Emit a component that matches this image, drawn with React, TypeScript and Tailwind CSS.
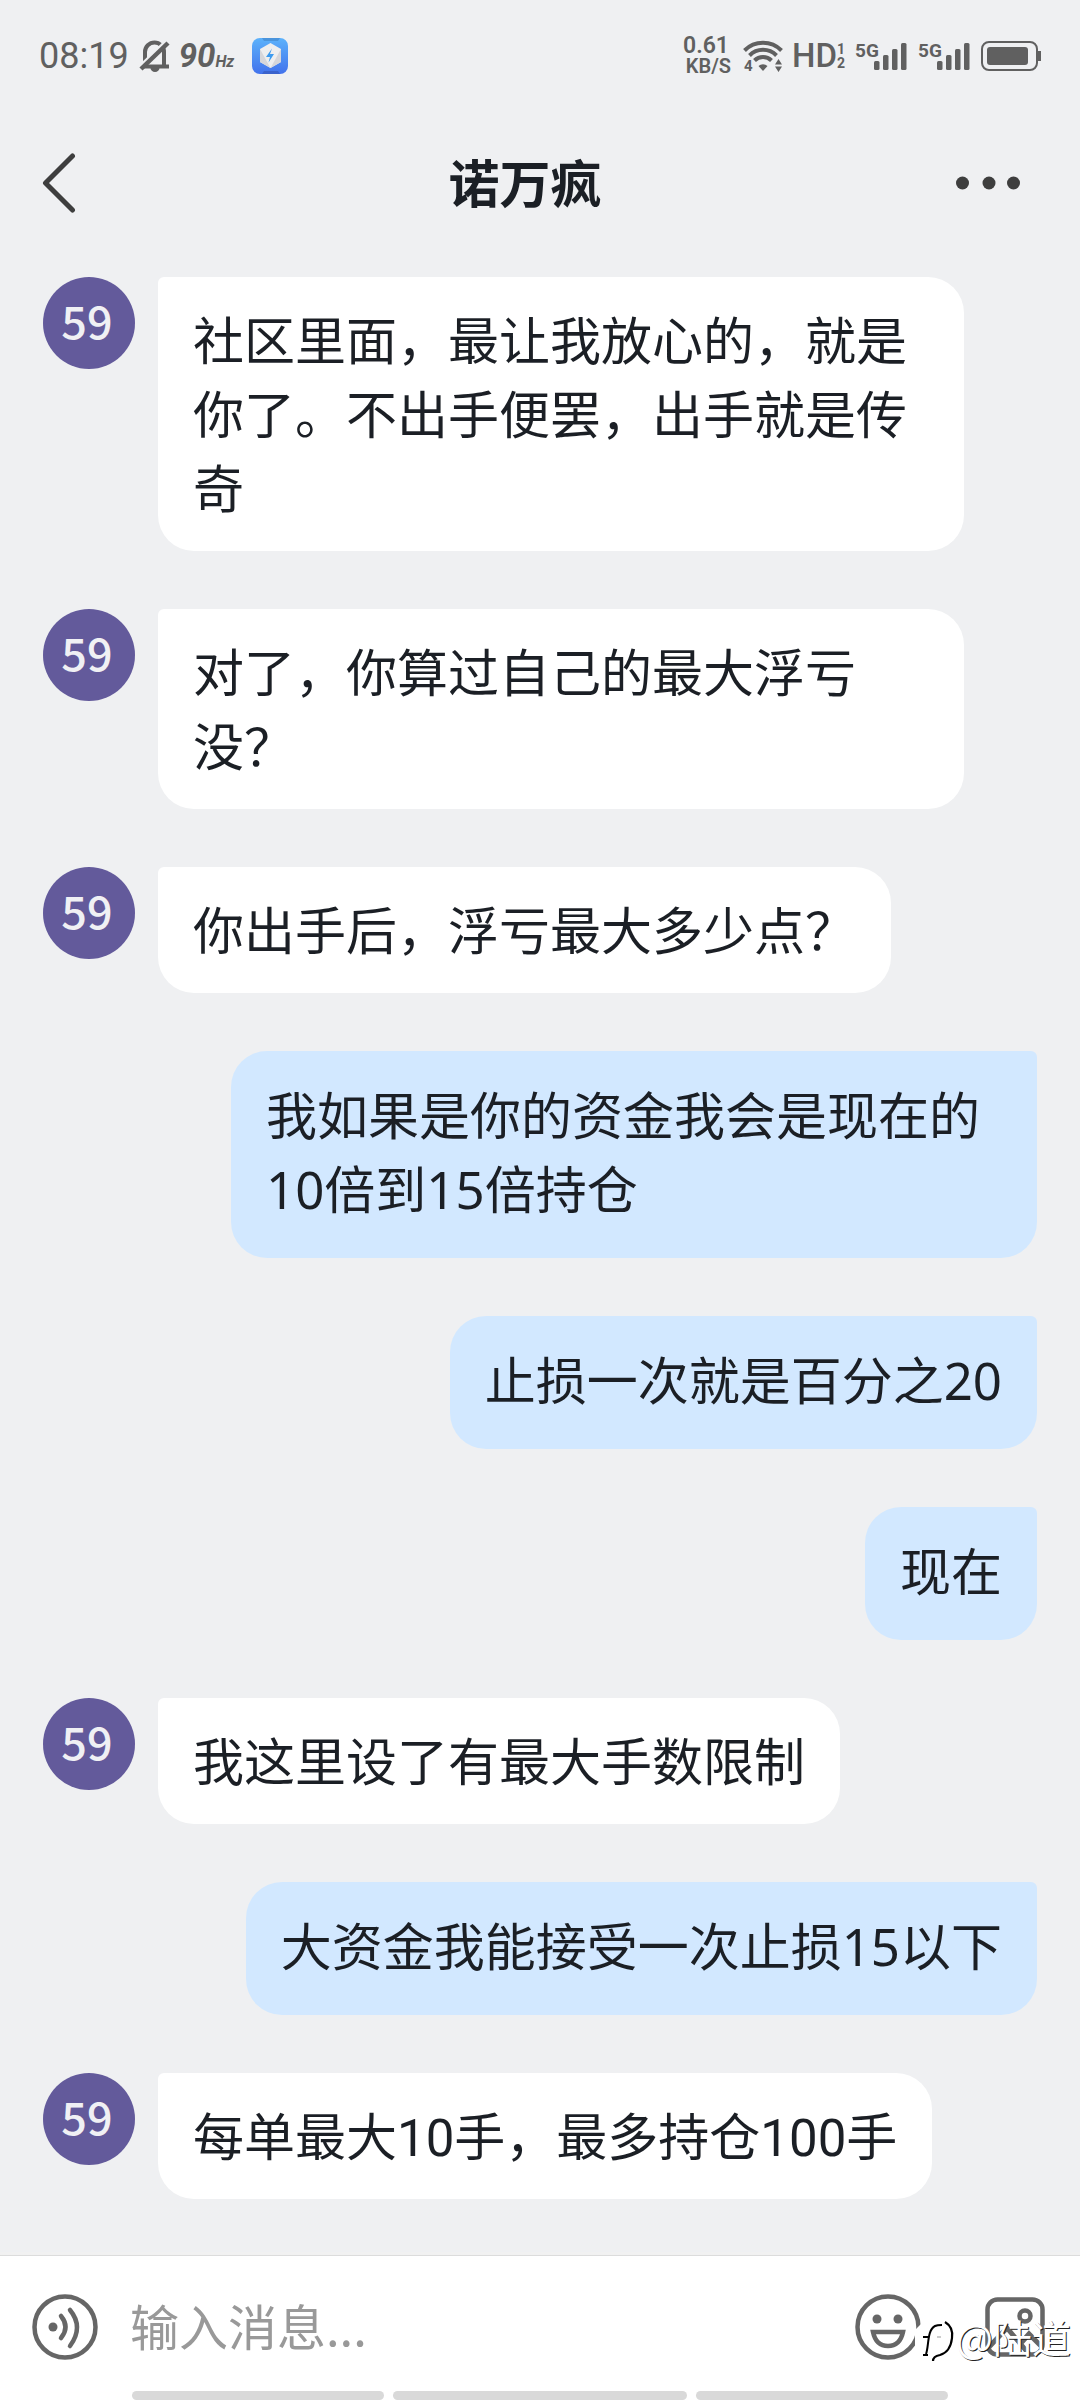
import React from "react";

type Message = { text: string; mine?: boolean };

const messages: Message[] = [
  { text: "社区里面，最让我放心的，就是你了。不出手便罢，出手就是传奇" },
  { text: "对了，你算过自己的最大浮亏没？" },
  { text: "你出手后，浮亏最大多少点？" },
  { text: "我如果是你的资金我会是现在的10倍到15倍持仓", mine: true },
  { text: "止损一次就是百分之20", mine: true },
  { text: "现在", mine: true },
  { text: "我这里设了有最大手数限制" },
  { text: "大资金我能接受一次止损15以下", mine: true },
  { text: "每单最大10手，最多持仓100手" },
];

function Signal() {
  return (
    <svg width="52" height="40" viewBox="0 -7 52 40" fill="#606060" aria-hidden="true">
      <text x="0" y="14" fontSize="19" fontWeight="700" fontFamily="Roboto, sans-serif">5G</text>
      <rect x="19" y="18" width="5.500" height="9" rx="1.5" />
      <rect x="28" y="12" width="5.500" height="15" rx="1.5" />
      <rect x="37" y="6" width="5.500" height="21" rx="1.5" />
      <rect x="46" y="0" width="5.500" height="27" rx="1.5" />
    </svg>
  );
}

function StatusBar() {
  return (
    <div className="flex h-[110px] items-center px-[39px] pt-[2px] font-['Roboto',sans-serif] text-[#606060]">
      <span className="text-[36px] leading-[36px]">08:19</span>
      <svg className="ml-[10px]" width="32" height="34" viewBox="0 0 32 34" fill="none" stroke="#606060" aria-hidden="true">
        <path d="M6 27V13a9.500 9.500 0 0 1 19 0V27" strokeWidth="4" />
        <path d="M2 27.500h28" strokeWidth="4" />
        <path d="M0 28 27 2" stroke="#eff0f2" strokeWidth="3" />
        <path d="M2 30 29 4" strokeWidth="4.500" />
        <path d="M11.500 29h9a4.500 4 0 0 1-9 0z" fill="#606060" stroke="none" />
      </svg>
      <span className="ml-2 flex items-baseline font-bold italic">
        <span className="text-[33px] leading-[36px]">90</span>
        <span className="text-[16px] leading-[20px]">Hz</span>
      </span>
      <svg className="ml-[18px]" width="36" height="36" viewBox="0 0 36 36" aria-hidden="true">
        <defs>
          <linearGradient id="app" x1="0" y1="0" x2="0" y2="1">
            <stop offset="0" stopColor="#5cb2fb" />
            <stop offset="1" stopColor="#4272ec" />
          </linearGradient>
        </defs>
        <rect width="36" height="36" rx="8" fill="url(#app)" />
        <path d="M10 0h18l-2 3H12z" fill="#4a94dc" />
        <path d="M10 36h18l-2-3H12z" fill="#3a62cc" />
        <path d="M18.500 5 29 11v13l-10.500 6L8 24V11z" fill="#eeeeef" />
        <path d="M8 11 18.500 30 8 24zM29 11 18.500 30 29 24z" fill="#d6d6da" />
        <path d="M20 10.500 14 19h4l-1.500 5.500L22 16h-4z" fill="#3d9bf0" />
      </svg>
      <div className="ml-auto flex items-center">
        <div className="flex flex-col items-end font-semibold">
          <span className="pr-[2px] text-[23px] leading-[20px]">0.61</span>
          <span className="text-[20px] leading-[20px]">KB/S</span>
        </div>
        <svg className="ml-3" width="40" height="40" viewBox="0 -4 40 40" fill="none" stroke="#606060" strokeWidth="4" aria-hidden="true">
          <path d="M1.500 10.500a26 26 0 0 1 37 0" />
          <path d="M6.500 15.500a19 19 0 0 1 27 0" />
          <path d="M11.500 20.500a12 12 0 0 1 17 0" />
          <path d="M15.500 26a6.500 6.500 0 0 1 9 0L20 31z" fill="#606060" stroke="none" />
          <text x="1" y="31" fontSize="15" fontWeight="700" fontFamily="Roboto, sans-serif" fill="#606060" stroke="none">4</text>
          <path d="M32 24.500 35.500 19l3.500 5.500zM32 26.500 35.500 32l3.500-5.500z" fill="#606060" stroke="none" />
        </svg>
        <span className="ml-[9px] text-[33px] font-medium leading-[36px]">HD</span>
        <span className="flex flex-col text-[14px] font-bold leading-[14px]">
          <span>1</span>
          <span>2</span>
        </span>
        <div className="ml-[10px] flex gap-[11px]">
          <Signal />
          <Signal />
        </div>
        <svg className="ml-[11px]" width="60" height="30" viewBox="0 0 60 30" fill="#606060" aria-hidden="true">
          <rect x="1" y="1" width="55" height="28" rx="7" fill="none" stroke="#606060" strokeWidth="2" />
          <rect x="6" y="6" width="41" height="18" rx="3" />
          <rect x="57" y="10" width="3" height="10" />
        </svg>
      </div>
    </div>
  );
}

function Header() {
  return (
    <header className="flex h-[146px] items-center justify-between pl-[40px] pr-[60px]">
      <button type="button" aria-label="返回" className="flex w-[54px]">
        <svg width="36" height="60" viewBox="0 0 36 60" fill="none" stroke="#3e3e3e" strokeWidth="5" strokeLinecap="round" strokeLinejoin="round" aria-hidden="true">
          <path d="M32.500 3 5.500 30l27 27" />
        </svg>
      </button>
      <h1 className="font-['Noto_Sans','Noto_Sans_CJK_SC',sans-serif] text-[51px] font-bold leading-[74px] text-[#1b1f25]">诺万疯</h1>
      <button type="button" aria-label="更多" className="flex">
        <svg width="64" height="14" viewBox="0 0 64 14" fill="#3e3e3e" aria-hidden="true">
          <circle cx="6.500" cy="7" r="6.500" />
          <circle cx="33" cy="7" r="6.500" />
          <circle cx="57.500" cy="7" r="6.500" />
        </svg>
      </button>
    </header>
  );
}

function Bubble({ text, mine }: Message) {
  if (mine) {
    return (
      <li className="flex justify-end">
        <p className="max-w-[806px] rounded-[36px] rounded-tr-md bg-[#d2e8ff] px-[35px] pt-[27px] pb-8 font-['Noto_Sans','Noto_Sans_CJK_SC',sans-serif]">{text}</p>
      </li>
    );
  }
  return (
    <li className="flex items-start gap-[23px]">
      <span className="flex size-[92px] shrink-0 items-center justify-center rounded-full bg-[#635a9b] pr-1 pb-2 font-['Noto_Sans_CJK_SC',sans-serif] text-[45px] font-medium leading-none text-[#f0f0f4]">59</span>
      <p className="max-w-[806px] rounded-[36px] rounded-tl-md bg-white px-[35px] pt-[29px] pb-[23px] font-['Roboto','Noto_Sans_CJK_SC',sans-serif]">{text}</p>
    </li>
  );
}

function Watermark() {
  return (
    <div className="pointer-events-none absolute right-[9px] bottom-[38px] flex items-end">
      <svg width="42" height="44" viewBox="0 0 42 44" fill="none" stroke="#000" aria-hidden="true">
        <path d="M1 12 8 5 20 2 34 4 38 18 34 32 20 40 1 34z" fill="#fff" stroke="none" />
        <path d="M12 36c3-8 1-24 9-28 2-1 4-1 7-1M9 19h6" strokeWidth="2" />
        <path d="M31 4c5 3 8 9 7 16-1 9-5 15-12 17-5 1-7 3-7 6" strokeWidth="2.200" />
        <path d="M9 37h5" strokeWidth="2" />
        <path d="M23 19h4" stroke="#999" strokeWidth="1" />
      </svg>
      <span className="pb-1 font-['Noto_Sans_CJK_SC',sans-serif] text-[39px] leading-[44px] text-white [text-shadow:1px_1px_0_#222]">@陆道</span>
    </div>
  );
}

export default function App() {
  return (
    <div className="flex min-h-screen flex-col bg-[#eff0f2]">
      <StatusBar />
      <Header />
      <main className="grow px-[43px] pt-[21px]">
        <ul className="flex flex-col gap-[58px] text-[51px] leading-[74px] text-[#1b1f25]">
          {messages.map((m) => (
            <Bubble key={m.text} {...m} />
          ))}
        </ul>
      </main>
      <footer className="relative border-t border-[#dcdcdc] bg-white shadow-[0_-3px_0_#f1f1f1]">
        <div className="flex h-[135px] items-center pt-[7px] pl-8 pr-[35px]">
          <button type="button" aria-label="语音" className="shrink-0">
            <svg width="66" height="66" viewBox="0 0 66 66" fill="none" stroke="#666" strokeWidth="4.500" strokeLinecap="round" aria-hidden="true">
              <circle cx="33" cy="33" r="30.500" />
              <circle cx="21" cy="33" r="4.500" fill="#666" stroke="none" />
              <path d="M29 22q9 11 0 22M38 16q14 17 0 36" />
            </svg>
          </button>
          <input
            aria-label="输入消息"
            placeholder="输入消息..."
            className="ml-8 min-w-0 grow bg-transparent pb-1 font-['Noto_Sans_CJK_SC',sans-serif] text-[49px] leading-[74px] outline-none placeholder:text-[#999]"
          />
          <button type="button" aria-label="表情" className="shrink-0">
            <svg width="66" height="66" viewBox="0 0 66 66" fill="none" stroke="#666" strokeWidth="4.500" aria-hidden="true">
              <circle cx="33" cy="33" r="30.500" />
              <circle cx="22" cy="25" r="4.500" fill="#666" stroke="none" />
              <circle cx="43" cy="25" r="4.500" fill="#666" stroke="none" />
              <path d="M18 38h30q-3 14-15 14T18 38z" />
            </svg>
          </button>
          <button type="button" aria-label="图片" className="ml-16 shrink-0">
            <svg width="60" height="60" viewBox="0 0 60 60" fill="none" stroke="#666" strokeWidth="4.500" aria-hidden="true">
              <rect x="2.500" y="2.500" width="55" height="55" rx="10" />
              <circle cx="40" cy="19" r="5.500" />
              <path d="M4 50 22 31l22 26M36 46l8-9 13 13" strokeWidth="5" />
            </svg>
          </button>
        </div>
        <div className="flex gap-[9px] px-[132px]">
          <span className="h-[9px] w-[252px] rounded-full bg-[#d9d9d9]" />
          <span className="h-[9px] grow rounded-full bg-[#d9d9d9]" />
          <span className="h-[9px] w-[252px] rounded-full bg-[#d9d9d9]" />
        </div>
        <Watermark />
      </footer>
    </div>
  );
}
